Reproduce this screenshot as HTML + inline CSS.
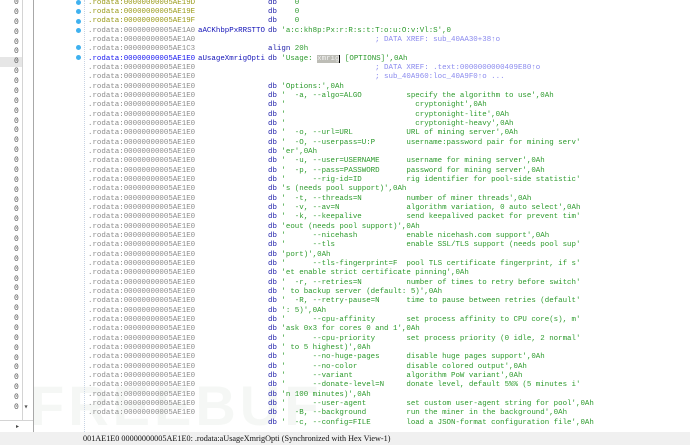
<!DOCTYPE html>
<html><head><meta charset="utf-8"><style>
html,body{margin:0;padding:0;width:690px;height:445px;overflow:hidden;background:#fff;position:relative}
.mono{font-family:"Liberation Mono",monospace;font-size:7.45px;line-height:9.33px;margin:0;position:absolute;white-space:pre}
.a{color:#8c8c8c}.o{color:#9a9a18}.sel{color:#1515f0}
.n{color:#1515b8}.k{color:#1c1ca8}.s{color:#2c9a2c}.c{color:#8a8aee}
.hl{background:#bdbdb6;color:#f4f4f4;outline:0}
#left{position:absolute;left:0;top:0;width:33px;height:432px;background:#fff;border-right:1px solid #a8a8a8}
#left .inner{position:absolute;left:0;top:0;width:22px;height:420px;border-right:1px solid #d4d4d4}
#zeros{position:absolute;left:14px;top:-2px;font-family:"Liberation Mono",monospace;font-size:8px;line-height:9.88px;color:#555;white-space:pre}
#hrow{position:absolute;left:0;top:57px;width:22px;height:10px;background:#e6e6e6}
#hsb{position:absolute;left:0;top:420px;width:33px;height:12px;border-top:1px solid #d4d4d4;font-size:6px;color:#444}
#gline{position:absolute;left:84px;top:0;width:0;height:432px;border-left:1px dotted #c8d4e4}
.dot{position:absolute;left:76px;width:5px;height:5px;border-radius:50%;background:#3fb1ef}
#status{position:absolute;left:0;top:432px;width:690px;height:13px;background:#f0f0f0;font-family:"Liberation Serif",serif;font-size:8.2px;line-height:13px;color:#111}
#wm{position:absolute;left:30px;top:378px;font-family:"Liberation Sans",sans-serif;font-weight:bold;font-size:56px;color:#dfe8df;opacity:.3;letter-spacing:4px;line-height:56px}
</style></head><body>
<div id="wm">FREEBUF</div>
<div id="left"><div class="inner"></div><div id="hrow"></div>
<div id="zeros">0
0
0
0
0
0
0
0
0
0
0
0
0
0
0
0
0
0
0
0
0
0
0
0
0
0
0
0
0
0
0
0
0
0
0
0
0
0
0
0
0
0 ▾</div>
<div id="hsb"><span style="position:absolute;left:16px;top:2px">▸</span></div>
</div>
<div id="gline"></div>
<div class="dot" style="top:0px"></div>
<div class="dot" style="top:9px"></div>
<div class="dot" style="top:19px"></div>
<div class="dot" style="top:28px"></div>
<div class="dot" style="top:45px"></div>
<div class="dot" style="top:55px"></div>
<pre class="mono" style="left:88px;top:-1.2px"><span class="o">.rodata:00000000005AE19D</span>
<span class="o">.rodata:00000000005AE19E</span>
<span class="o">.rodata:00000000005AE19F</span>
<span class="a">.rodata:00000000005AE1A0</span>
<span class="a">.rodata:00000000005AE1A0</span>
<span class="a">.rodata:00000000005AE1C3</span>
<span class="sel">.rodata:00000000005AE1E0</span>
<span class="a">.rodata:00000000005AE1E0
.rodata:00000000005AE1E0
.rodata:00000000005AE1E0
.rodata:00000000005AE1E0
.rodata:00000000005AE1E0
.rodata:00000000005AE1E0
.rodata:00000000005AE1E0
.rodata:00000000005AE1E0
.rodata:00000000005AE1E0
.rodata:00000000005AE1E0
.rodata:00000000005AE1E0
.rodata:00000000005AE1E0
.rodata:00000000005AE1E0
.rodata:00000000005AE1E0
.rodata:00000000005AE1E0
.rodata:00000000005AE1E0
.rodata:00000000005AE1E0
.rodata:00000000005AE1E0
.rodata:00000000005AE1E0
.rodata:00000000005AE1E0
.rodata:00000000005AE1E0
.rodata:00000000005AE1E0
.rodata:00000000005AE1E0
.rodata:00000000005AE1E0
.rodata:00000000005AE1E0
.rodata:00000000005AE1E0
.rodata:00000000005AE1E0
.rodata:00000000005AE1E0
.rodata:00000000005AE1E0
.rodata:00000000005AE1E0
.rodata:00000000005AE1E0
.rodata:00000000005AE1E0
.rodata:00000000005AE1E0
.rodata:00000000005AE1E0
.rodata:00000000005AE1E0
.rodata:00000000005AE1E0
.rodata:00000000005AE1E0
.rodata:00000000005AE1E0</span></pre>
<pre class="mono n" style="left:198px;top:-1.2px">

 
 
aACKhbpPxRRSTTO
 
 
aUsageXmrigOpti</pre>
<pre class="mono" style="left:268px;top:-1.2px"><span class="k">db</span>    <span class="s">0</span>
<span class="k">db</span>    <span class="s">0</span>
<span class="k">db</span>    <span class="s">0</span>
<span class="k">db</span> <span class="s">'a:c:kh8p:Px:r:R:s:t:T:o:u:O:v:Vl:S',0</span>
<span class="c">                        ; DATA XREF: sub_40AA30+38↑o</span>
<span class="k">align</span> <span class="s">20h</span>
<span class="k">db</span> <span class="s">'Usage: <span class="hl">xmrig</span><span style="border-left:1px solid #000"></span> [OPTIONS]',0Ah</span>
<span class="c">                        ; DATA XREF: .text:0000000000409E80↑o</span>
<span class="c">                        ; sub_40A960:loc_40A9F0↑o ...</span>
<span class="k">db</span> <span class="s">'Options:',0Ah</span>
<span class="k">db</span> <span class="s">'  -a, --algo=ALGO          specify the algorithm to use',0Ah</span>
<span class="k">db</span> <span class="s">'                             cryptonight',0Ah</span>
<span class="k">db</span> <span class="s">'                             cryptonight-lite',0Ah</span>
<span class="k">db</span> <span class="s">'                             cryptonight-heavy',0Ah</span>
<span class="k">db</span> <span class="s">'  -o, --url=URL            URL of mining server',0Ah</span>
<span class="k">db</span> <span class="s">'  -O, --userpass=U:P       username:password pair for mining serv'</span>
<span class="k">db</span> <span class="s">'er',0Ah</span>
<span class="k">db</span> <span class="s">'  -u, --user=USERNAME      username for mining server',0Ah</span>
<span class="k">db</span> <span class="s">'  -p, --pass=PASSWORD      password for mining server',0Ah</span>
<span class="k">db</span> <span class="s">'      --rig-id=ID          rig identifier for pool-side statistic'</span>
<span class="k">db</span> <span class="s">'s (needs pool support)',0Ah</span>
<span class="k">db</span> <span class="s">'  -t, --threads=N          number of miner threads',0Ah</span>
<span class="k">db</span> <span class="s">'  -v, --av=N               algorithm variation, 0 auto select',0Ah</span>
<span class="k">db</span> <span class="s">'  -k, --keepalive          send keepalived packet for prevent tim'</span>
<span class="k">db</span> <span class="s">'eout (needs pool support)',0Ah</span>
<span class="k">db</span> <span class="s">'      --nicehash           enable nicehash.com support',0Ah</span>
<span class="k">db</span> <span class="s">'      --tls                enable SSL/TLS support (needs pool sup'</span>
<span class="k">db</span> <span class="s">'port)',0Ah</span>
<span class="k">db</span> <span class="s">'      --tls-fingerprint=F  pool TLS certificate fingerprint, if s'</span>
<span class="k">db</span> <span class="s">'et enable strict certificate pinning',0Ah</span>
<span class="k">db</span> <span class="s">'  -r, --retries=N          number of times to retry before switch'</span>
<span class="k">db</span> <span class="s">' to backup server (default: 5)',0Ah</span>
<span class="k">db</span> <span class="s">'  -R, --retry-pause=N      time to pause between retries (default'</span>
<span class="k">db</span> <span class="s">': 5)',0Ah</span>
<span class="k">db</span> <span class="s">'      --cpu-affinity       set process affinity to CPU core(s), m'</span>
<span class="k">db</span> <span class="s">'ask 0x3 for cores 0 and 1',0Ah</span>
<span class="k">db</span> <span class="s">'      --cpu-priority       set process priority (0 idle, 2 normal'</span>
<span class="k">db</span> <span class="s">' to 5 highest)',0Ah</span>
<span class="k">db</span> <span class="s">'      --no-huge-pages      disable huge pages support',0Ah</span>
<span class="k">db</span> <span class="s">'      --no-color           disable colored output',0Ah</span>
<span class="k">db</span> <span class="s">'      --variant            algorithm PoW variant',0Ah</span>
<span class="k">db</span> <span class="s">'      --donate-level=N     donate level, default 5%% (5 minutes i'</span>
<span class="k">db</span> <span class="s">'n 100 minutes)',0Ah</span>
<span class="k">db</span> <span class="s">'      --user-agent         set custom user-agent string for pool',0Ah</span>
<span class="k">db</span> <span class="s">'  -B, --background         run the miner in the background',0Ah</span>
<span class="k">db</span> <span class="s">'  -c, --config=FILE        load a JSON-format configuration file',0Ah</span></pre>
<div id="status"><span style="position:absolute;left:83px">001AE1E0 00000000005AE1E0: .rodata:aUsageXmrigOpti (Synchronized with Hex View-1)</span></div>
</body></html>
